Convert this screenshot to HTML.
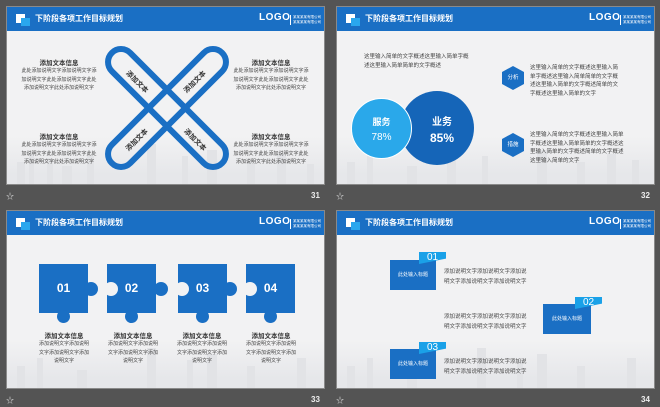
<!DOCTYPE html>
<html><head><meta charset="utf-8">
<style>
*{margin:0;padding:0;box-sizing:border-box}
body{width:660px;height:407px;background:#545454;position:relative;overflow:hidden;font-family:"Liberation Sans","Noto Sans CJK SC",sans-serif}
.s{position:absolute;width:319px;height:179px;background:#f2f2f3;overflow:hidden;border:1px solid #8a8a8a}
.hd{position:absolute;left:0;top:0;width:100%;height:24px;background:#1a6fc4;z-index:2}
.ic1{position:absolute;left:9px;top:7px;width:9px;height:9px;background:#fff}
.ic2{position:absolute;left:14px;top:11px;width:9px;height:8px;background:#2aa7ee}
.tt{position:absolute;left:28px;top:6px;color:#fff;font-size:8px;font-weight:bold;white-space:nowrap}
.lg{position:absolute;left:252px;top:5px;color:#fff;font-size:10px;font-weight:bold;letter-spacing:.5px}
.lgs{position:absolute;left:283px;top:8px;width:1px;height:10px;background:#fff}
.lt{position:absolute;left:286px;top:8px;color:#fff;font-size:3.5px;line-height:5px;white-space:nowrap}
.city{position:absolute;left:0;bottom:0;width:100%;height:48px;background:linear-gradient(to bottom,rgba(230,231,234,0),#e6e7ea 80%)}
.city i{position:absolute;bottom:0;background:#e2e3e6}
.star{position:absolute;color:#ddd;font-size:8px}
.num{position:absolute;color:#eee;font-size:8px;font-weight:bold}
.a{position:absolute;white-space:nowrap}
.h{font-size:6.5px;font-weight:bold;color:#333;text-align:center}
.b{font-size:5px;color:#444;line-height:8.5px;text-align:center}
.bar{position:absolute;width:162px;height:32px;border:6px solid #1a6fc4;border-radius:16px;left:79px;top:85px}
.rt{position:absolute;font-size:7px;font-weight:bold;color:#333;white-space:nowrap}
.hex{position:absolute;width:22px;height:24px;background:#1a6fc4;clip-path:polygon(50% 0,100% 25%,100% 75%,50% 100%,0 75%,0 25%);color:#fff;font-size:5.5px;text-align:center;line-height:24px}
.pz{position:absolute;width:49px;height:49px;background:#1a6fc4;color:#fff;font-size:12px;font-weight:bold;text-align:center;line-height:49px}
.dot{position:absolute;border-radius:50%}
.bx{position:absolute;width:46px;height:30px;background:#1a6fc4;color:#fff;font-size:5px;text-align:center;line-height:30px}
.tg{position:absolute;width:27px;height:12px;background:#1aa1e8;color:#fff;font-size:10px;line-height:12px;text-align:center;clip-path:polygon(0 0,100% 0,100% 55%,0 100%)}
.t4{position:absolute;font-size:5.5px;color:#444;line-height:10px;white-space:nowrap}
</style></head><body>

<!-- slide 31 -->
<div class="s" style="left:6px;top:6px">
<div class="hd"><div class="ic1"></div><div class="ic2"></div><div class="tt">下阶段各项工作目标规划</div><div class="lg">LOGO</div><div class="lgs"></div><div class="lt">某某某某有限公司<br>某某某某有限公司</div></div>
<div class="city"><i style="left:10px;width:8px;height:22px"></i><i style="left:22px;width:5px;height:30px"></i><i style="left:40px;width:6px;height:26px"></i><i style="left:55px;width:10px;height:18px"></i><i style="left:80px;width:7px;height:28px"></i><i style="left:140px;width:9px;height:40px"></i><i style="left:175px;width:6px;height:28px"></i><i style="left:200px;width:10px;height:34px"></i><i style="left:240px;width:8px;height:22px"></i><i style="left:270px;width:9px;height:30px"></i><i style="left:300px;width:7px;height:20px"></i></div>
<div class="a h" style="left:22px;top:50px;width:60px">添加文本信息</div>
<div class="a b" style="left:12px;top:60px;width:80px">此处添加说明文字添加说明文字添<br>加说明文字此处添加说明文字此处<br>添加说明文字此处添加说明文字</div>
<div class="a h" style="left:22px;top:124px;width:60px">添加文本信息</div>
<div class="a b" style="left:12px;top:134px;width:80px">此处添加说明文字添加说明文字添<br>加说明文字此处添加说明文字此处<br>添加说明文字此处添加说明文字</div>
<div class="a h" style="left:234px;top:50px;width:60px">添加文本信息</div>
<div class="a b" style="left:224px;top:60px;width:80px">此处添加说明文字添加说明文字添<br>加说明文字此处添加说明文字此处<br>添加说明文字此处添加说明文字</div>
<div class="a h" style="left:234px;top:124px;width:60px">添加文本信息</div>
<div class="a b" style="left:224px;top:134px;width:80px">此处添加说明文字添加说明文字添<br>加说明文字此处添加说明文字此处<br>添加说明文字此处添加说明文字</div>
<div class="bar" style="transform:rotate(45deg)"></div>
<div class="bar" style="transform:rotate(-45deg)"></div>
<div class="rt" style="left:116px;top:70px;transform:rotate(45deg)">添加文本</div>
<div class="rt" style="left:174px;top:70px;transform:rotate(-45deg)">添加文本</div>
<div class="rt" style="left:116px;top:128px;transform:rotate(-45deg)">添加文本</div>
<div class="rt" style="left:174px;top:128px;transform:rotate(45deg)">添加文本</div>
</div>
<div class="star" style="left:6px;top:191px">☆</div><div class="num" style="left:311px;top:191px">31</div>

<!-- slide 32 -->
<div class="s" style="left:336px;top:6px">
<div class="hd"><div class="ic1"></div><div class="ic2"></div><div class="tt">下阶段各项工作目标规划</div><div class="lg">LOGO</div><div class="lgs"></div><div class="lt">某某某某有限公司<br>某某某某有限公司</div></div>
<div class="city"><i style="left:10px;width:8px;height:22px"></i><i style="left:30px;width:6px;height:30px"></i><i style="left:70px;width:10px;height:18px"></i><i style="left:110px;width:9px;height:40px"></i><i style="left:145px;width:6px;height:28px"></i><i style="left:200px;width:10px;height:34px"></i><i style="left:240px;width:8px;height:22px"></i><i style="left:270px;width:9px;height:30px"></i><i style="left:295px;width:7px;height:24px"></i></div>
<div class="t4" style="left:27px;top:46px;line-height:9px">这里输入简单的文字概述这里输入简单字概<br>述这里输入简单简单的文字概述</div>
<div class="hex" style="left:165px;top:59px">分析</div>
<div class="hex" style="left:165px;top:126px">措施</div>
<div class="t4" style="left:193px;top:57px;line-height:8.5px">这里输入简单的文字概述这里输入简<br>单字概述这里输入简单简单的文字概<br>述这里输入简单的文字概述简单的文<br>字概述这里输入简单的文字</div>
<div class="t4" style="left:193px;top:124px;line-height:8.5px">这里输入简单的文字概述这里输入简单<br>字概述这里输入简单简单的文字概述这<br>里输入简单的文字概述简单的文字概述<br>这里输入简单的文字</div>
<div class="dot" style="left:63px;top:84px;width:74px;height:74px;background:#1565b8"></div>
<div class="dot" style="left:14px;top:91px;width:61px;height:61px;background:#2aa8ea;border:1px solid #fff"></div>
<div class="a" style="left:14px;top:108px;width:61px;text-align:center;color:#fff;font-size:9px;font-weight:bold">服务</div>
<div class="a" style="left:14px;top:125px;width:61px;text-align:center;color:#fff;font-size:10px">78%</div>
<div class="a" style="left:75px;top:106px;width:60px;text-align:center;color:#fff;font-size:10px;font-weight:bold">业务</div>
<div class="a" style="left:75px;top:124px;width:60px;text-align:center;color:#fff;font-size:12px;font-weight:bold">85%</div>
</div>
<div class="star" style="left:336px;top:191px">☆</div><div class="num" style="left:641px;top:191px">32</div>

<!-- slide 33 -->
<div class="s" style="left:6px;top:210px">
<div class="hd"><div class="ic1"></div><div class="ic2"></div><div class="tt">下阶段各项工作目标规划</div><div class="lg">LOGO</div><div class="lgs"></div><div class="lt">某某某某有限公司<br>某某某某有限公司</div></div>
<div class="city"><i style="left:10px;width:8px;height:22px"></i><i style="left:30px;width:6px;height:30px"></i><i style="left:70px;width:10px;height:18px"></i><i style="left:140px;width:9px;height:40px"></i><i style="left:180px;width:6px;height:28px"></i><i style="left:200px;width:10px;height:34px"></i><i style="left:240px;width:8px;height:22px"></i><i style="left:290px;width:9px;height:30px"></i></div>
<div class="pz" style="left:32px;top:53px">01</div>
<div class="dot" style="left:77px;top:71px;width:14px;height:14px;background:#1a6fc4"></div>
<div class="dot" style="left:50px;top:99px;width:13px;height:13px;background:#1a6fc4"></div>
<div class="pz" style="left:100px;top:53px">02</div>
<div class="dot" style="left:97px;top:71px;width:14px;height:14px;background:#f2f2f3"></div>
<div class="dot" style="left:147px;top:71px;width:14px;height:14px;background:#1a6fc4"></div>
<div class="dot" style="left:118px;top:99px;width:13px;height:13px;background:#1a6fc4"></div>
<div class="pz" style="left:171px;top:53px">03</div>
<div class="dot" style="left:168px;top:71px;width:14px;height:14px;background:#f2f2f3"></div>
<div class="dot" style="left:216px;top:71px;width:14px;height:14px;background:#1a6fc4"></div>
<div class="dot" style="left:189px;top:99px;width:13px;height:13px;background:#1a6fc4"></div>
<div class="pz" style="left:239px;top:53px">04</div>
<div class="dot" style="left:236px;top:71px;width:14px;height:14px;background:#f2f2f3"></div>
<div class="dot" style="left:257px;top:99px;width:13px;height:13px;background:#1a6fc4"></div>
<div class="a h" style="left:27px;top:119px;width:60px">添加文本信息</div>
<div class="a b" style="left:22px;top:129px;width:70px">添加说明文字添加说明<br>文字添加说明文字添加<br>说明文字</div>
<div class="a h" style="left:96px;top:119px;width:60px">添加文本信息</div>
<div class="a b" style="left:91px;top:129px;width:70px">添加说明文字添加说明<br>文字添加说明文字添加<br>说明文字</div>
<div class="a h" style="left:165px;top:119px;width:60px">添加文本信息</div>
<div class="a b" style="left:160px;top:129px;width:70px">添加说明文字添加说明<br>文字添加说明文字添加<br>说明文字</div>
<div class="a h" style="left:234px;top:119px;width:60px">添加文本信息</div>
<div class="a b" style="left:229px;top:129px;width:70px">添加说明文字添加说明<br>文字添加说明文字添加<br>说明文字</div>
</div>
<div class="star" style="left:6px;top:395px">☆</div><div class="num" style="left:311px;top:395px">33</div>

<!-- slide 34 -->
<div class="s" style="left:336px;top:210px">
<div class="hd"><div class="ic1"></div><div class="ic2"></div><div class="tt">下阶段各项工作目标规划</div><div class="lg">LOGO</div><div class="lgs"></div><div class="lt">某某某某有限公司<br>某某某某有限公司</div></div>
<div class="city"><i style="left:10px;width:8px;height:22px"></i><i style="left:30px;width:6px;height:30px"></i><i style="left:70px;width:10px;height:18px"></i><i style="left:140px;width:9px;height:40px"></i><i style="left:180px;width:6px;height:28px"></i><i style="left:200px;width:10px;height:34px"></i><i style="left:240px;width:8px;height:22px"></i><i style="left:290px;width:9px;height:30px"></i></div>
<div class="bx" style="left:53px;top:49px">此处输入标题</div>
<div class="tg" style="left:82px;top:41px">01</div>
<div class="t4" style="left:107px;top:56px">添加说明文字添加说明文字添加说<br>明文字添加说明文字添加说明文字</div>
<div class="bx" style="left:206px;top:93px;width:48px">此处输入标题</div>
<div class="tg" style="left:238px;top:86px">02</div>
<div class="t4" style="left:107px;top:101px">添加说明文字添加说明文字添加说<br>明文字添加说明文字添加说明文字</div>
<div class="bx" style="left:53px;top:138px">此处输入标题</div>
<div class="tg" style="left:82px;top:131px">03</div>
<div class="t4" style="left:107px;top:146px">添加说明文字添加说明文字添加说<br>明文字添加说明文字添加说明文字</div>
</div>
<div class="star" style="left:336px;top:395px">☆</div><div class="num" style="left:641px;top:395px">34</div>
</body></html>
